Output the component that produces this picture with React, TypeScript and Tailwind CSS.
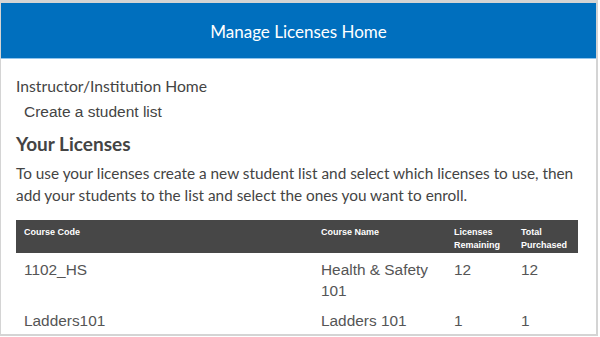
import React from "react";

const rows = [
  { code: "1102_HS", name: "Health & Safety 101", rem: "12", tot: "12" },
  { code: "Ladders101", name: "Ladders 101", rem: "1", tot: "1" },
];

export default function App() {
  return (
    <div className="w-[600px] h-[337px] overflow-hidden bg-white">
      <div className="w-[598px] h-[336px] border-t-[3px] border-l border-r-2 border-b-2 border-[#d4d4d4] overflow-hidden flex flex-col">
        <div className="h-[56px] shrink-0 bg-[#006fbe] border-b border-[#8fc4ec] flex items-center justify-center pt-[2px]">
          <span className="text-white text-[17px] font-['Lato',sans-serif]">Manage Licenses Home</span>
        </div>
        <div className="pl-[15px] pr-[18px] pt-[17px] text-[#444]">
          <div className="text-[15.7px] leading-[20px] font-['Lato',sans-serif]">Instructor/Institution Home</div>
          <div className="pl-[8px] mt-[6px] text-[15.5px] leading-[20px] font-['Liberation_Sans',Arial,sans-serif]">Create a student list</div>
          <h2 className="mt-[9px] text-[19px] leading-[26px] font-bold font-['Lato',sans-serif] text-[#444]">Your Licenses</h2>
          <p className="mt-[5px] text-[15.35px] leading-[22px] font-['Lato',sans-serif] text-[#444] w-[565px]">
            To use your licenses create a new student list and select which licenses to use, then add your students to the list and select the ones you want to enroll.
          </p>
          <table className="mt-[14px] w-[562px] table-fixed border-collapse font-['Liberation_Sans',Arial,sans-serif]">
            <colgroup>
              <col className="w-[297px]" />
              <col className="w-[133px]" />
              <col className="w-[67px]" />
              <col className="w-[65px]" />
            </colgroup>
            <thead>
              <tr className="bg-[#474747] text-white text-[9px] leading-[13px] font-bold align-top h-[33px]">
                <th className="text-left pl-[8px] pt-[6px] pb-[1px] font-bold">Course Code</th>
                <th className="text-left pl-[8px] pt-[6px] pb-[1px] font-bold">Course Name</th>
                <th className="text-left pl-[8px] pt-[6px] pb-[1px] font-bold">Licenses<br />Remaining</th>
                <th className="text-left pl-[8px] pt-[6px] pb-[1px] font-bold">Total<br />Purchased</th>
              </tr>
            </thead>
            <tbody>
              {rows.map((r) => (
                <tr key={r.code} className="align-top text-[15.4px] leading-[21px] text-[#555]">
                  <td className="pl-[8px] pt-[6px] pb-[3px]">{r.code}</td>
                  <td className="pl-[8px] pr-[8px] pt-[6px] pb-[3px]">{r.name}</td>
                  <td className="pl-[8px] pt-[6px] pb-[3px]">{r.rem}</td>
                  <td className="pl-[8px] pt-[6px] pb-[3px]">{r.tot}</td>
                </tr>
              ))}
            </tbody>
          </table>
        </div>
      </div>
    </div>
  );
}
